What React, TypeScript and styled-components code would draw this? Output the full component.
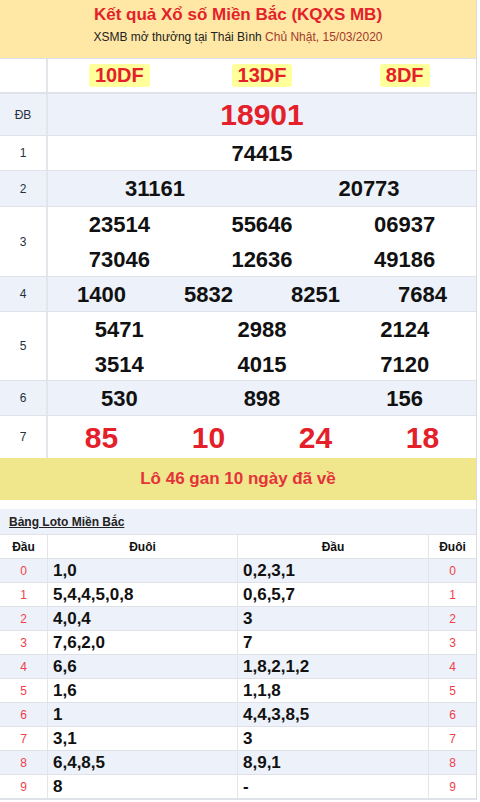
import React from "react";
import styled, { createGlobalStyle } from "styled-components";

const Global = createGlobalStyle`
  html, body { margin: 0; padding: 0; background: #fff; }
  body { font-family: "Liberation Sans", Arial, sans-serif; }
  * { box-sizing: border-box; }
`;

const Page = styled.div`
  width: 477px;
  border-right: 1px solid #d8dbe0;
`;

const Header = styled.div`
  background: #ffe8a6;
  height: 58px;
  display: flex;
  flex-direction: column;
  align-items: center;
  padding-top: 4px;
`;

const Title = styled.h1`
  margin: 0;
  font-size: 17px;
  line-height: 22px;
  font-weight: bold;
  color: #e4202a;
`;

const Sub = styled.div`
  margin-top: 3px;
  font-size: 12px;
  line-height: 16px;
  color: #222;
`;

const SubDate = styled.span`
  color: #a23a2a;
`;

const Row = styled.div<{ $h: number; $alt?: boolean; $thick?: boolean }>`
  display: flex;
  height: ${(p) => p.$h}px;
  background: ${(p) => (p.$alt ? "#edf1f9" : "#fff")};
  border-top: ${(p) => (p.$thick ? 2 : 1)}px solid #dfe3e9;
`;

const Label = styled.div`
  width: 48px;
  flex: none;
  border-right: 2px solid #e2e5ea;
  display: flex;
  align-items: center;
  justify-content: center;
  font-size: 12px;
  color: #263040;
`;

const Cells = styled.div<{ $cols: number }>`
  flex: 1;
  display: grid;
  grid-template-columns: repeat(${(p) => p.$cols}, 1fr);
  align-items: center;
`;

const Num = styled.div<{ $size?: number; $red?: boolean }>`
  text-align: center;
  font-weight: bold;
  font-size: ${(p) => p.$size || 22}px;
  line-height: 35px;
  color: ${(p) => (p.$red ? "#e4202a" : "#111")};
`;

const Code = styled.span`
  display: inline-block;
  background: #ffff9c;
  border-radius: 3px;
  padding: 0 6px;
  font-size: 20px;
  line-height: 23px;
  font-weight: bold;
  color: #e4202a;
`;

const CodeCell = styled.div`
  text-align: center;
`;

const Gan = styled.div`
  background: #f0e68c;
  height: 42px;
  display: flex;
  align-items: center;
  justify-content: center;
  font-size: 17px;
  font-weight: bold;
  color: #e4323a;
`;

const Spacer = styled.div`
  height: 9px;
`;

const LotoBar = styled.div`
  background: #edf1f9;
  height: 26px;
  display: flex;
  align-items: center;
  padding-left: 9px;
  border-bottom: 1px solid #dfe3e9;
`;

const LotoTitle = styled.a`
  font-size: 12px;
  font-weight: bold;
  color: #222;
  text-decoration: underline;
`;

const LotoTable = styled.div`
  display: grid;
  grid-template-columns: 48px 190px 191px 1fr;
  border-bottom: 1px solid #dfe3e9;
`;

const LCell = styled.div<{ $alt?: boolean; $align?: string; $head?: boolean; $last?: boolean }>`
  height: 24px;
  display: flex;
  align-items: center;
  justify-content: ${(p) => p.$align || "center"};
  padding-left: ${(p) => (p.$align === "flex-start" ? "5px" : "0")};
  background: ${(p) => (p.$alt ? "#edf1f9" : "#fff")};
  border-bottom: 1px solid #dfe3e9;
  border-right: ${(p) => (p.$last ? "none" : "1px solid #e2e5ea")};
  font-size: ${(p) => (p.$head ? 12 : 17)}px;
  font-weight: bold;
  color: #111;
`;

const RedIdx = styled.span`
  font-size: 12px;
  font-weight: normal;
  color: #f0404a;
`;

const codes = ["10DF", "13DF", "8DF"];

type Prize = { label: string; nums: string[]; cols: number; h: number; big?: boolean; red?: boolean };

const prizes: Prize[] = [
  { label: "ĐB", nums: ["18901"], cols: 1, h: 43, big: true, red: true },
  { label: "1", nums: ["74415"], cols: 1, h: 35 },
  { label: "2", nums: ["31161", "20773"], cols: 2, h: 36 },
  { label: "3", nums: ["23514", "55646", "06937", "73046", "12636", "49186"], cols: 3, h: 70 },
  { label: "4", nums: ["1400", "5832", "8251", "7684"], cols: 4, h: 35 },
  { label: "5", nums: ["5471", "2988", "2124", "3514", "4015", "7120"], cols: 3, h: 69 },
  { label: "6", nums: ["530", "898", "156"], cols: 3, h: 35 },
  { label: "7", nums: ["85", "10", "24", "18"], cols: 4, h: 43, big: true, red: true },
];

const loto = [
  ["1,0", "0,2,3,1"],
  ["5,4,4,5,0,8", "0,6,5,7"],
  ["4,0,4", "3"],
  ["7,6,2,0", "7"],
  ["6,6", "1,8,2,1,2"],
  ["1,6", "1,1,8"],
  ["1", "4,4,3,8,5"],
  ["3,1", "3"],
  ["6,4,8,5", "8,9,1"],
  ["8", "-"],
];

export default function App() {
  return (
    <Page>
      <Global />
      <Header>
        <Title>Kết quả Xổ số Miền Bắc (KQXS MB)</Title>
        <Sub>
          XSMB mở thưởng tại Thái Bình <SubDate>Chủ Nhật, 15/03/2020</SubDate>
        </Sub>
      </Header>
      <Row $h={34}>
        <Label />
        <Cells $cols={3}>
          {codes.map((c) => (
            <CodeCell key={c}>
              <Code>{c}</Code>
            </CodeCell>
          ))}
        </Cells>
      </Row>
      {prizes.map((p, i) => (
        <Row key={p.label} $h={p.h} $alt={i % 2 === 0} $thick={i === 0}>
          <Label>{p.label}</Label>
          <Cells $cols={p.cols}>
            {p.nums.map((n, j) => (
              <Num key={j} $size={p.big ? 30 : 22} $red={p.red}>
                {n}
              </Num>
            ))}
          </Cells>
        </Row>
      ))}
      <Gan>Lô 46 gan 10 ngày đã về</Gan>
      <Spacer />
      <LotoBar>
        <LotoTitle>Bảng Loto Miền Bắc</LotoTitle>
      </LotoBar>
      <LotoTable>
        <LCell $head>Đầu</LCell>
        <LCell $head>Đuôi</LCell>
        <LCell $head>Đầu</LCell>
        <LCell $head $last>Đuôi</LCell>
        {loto.map((r, i) => (
          <React.Fragment key={i}>
            <LCell $alt={i % 2 === 0}>
              <RedIdx>{i}</RedIdx>
            </LCell>
            <LCell $alt={i % 2 === 0} $align="flex-start">{r[0]}</LCell>
            <LCell $alt={i % 2 === 0} $align="flex-start">{r[1]}</LCell>
            <LCell $alt={i % 2 === 0} $last>
              <RedIdx>{i}</RedIdx>
            </LCell>
          </React.Fragment>
        ))}
      </LotoTable>
    </Page>
  );
}
